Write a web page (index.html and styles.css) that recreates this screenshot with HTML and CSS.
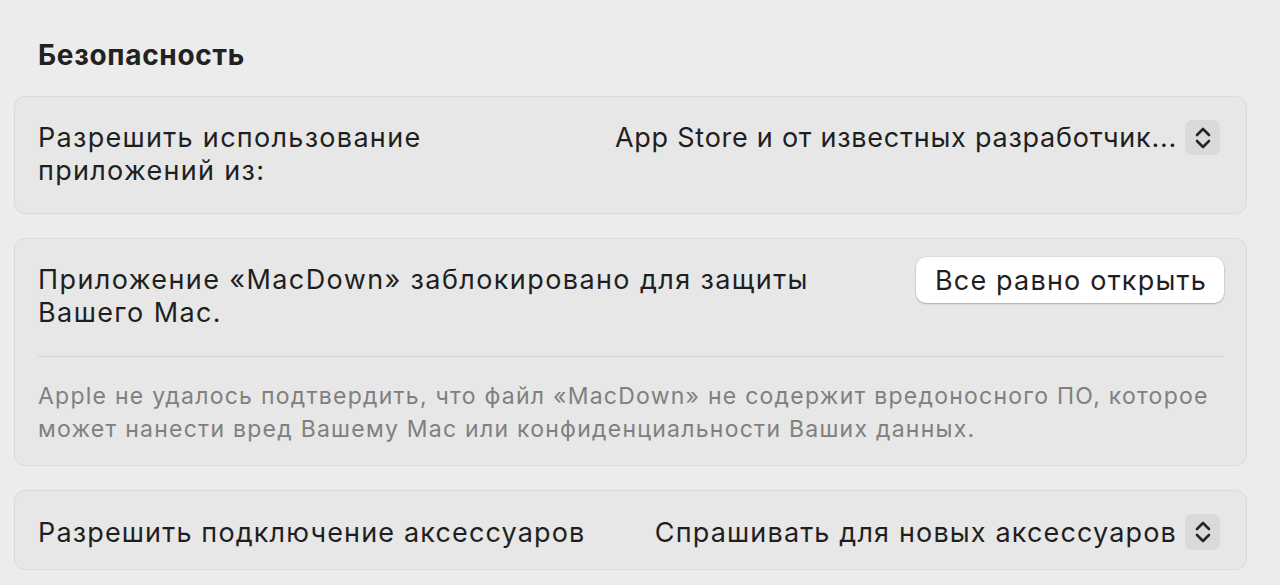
FILE: index.html
```html
<!DOCTYPE html>
<html lang="ru">
<head>
<meta charset="utf-8">
<link rel="stylesheet" href="styles.css">
</head>
<body>
<div class="page">
  <h2 class="section-title">Безопасность</h2>
  <div class="card card-apps">
    <div class="row">
      <div class="label">Разрешить использование<br>приложений из:</div>
      <div class="control">
        <span class="value value-tight">App Store и от известных разработчик...</span>
        <span class="stepper"><svg width="18" height="24" viewBox="0 0 18 24"><path d="M3 9 L9 3 L15 9 M3 15 L9 21 L15 15" fill="none" stroke="#262626" stroke-width="2.6" stroke-linecap="round" stroke-linejoin="round"/></svg></span>
      </div>
    </div>
  </div>
  <div class="card card-blocked">
    <div class="row">
      <div class="label label-wide">Приложение «MacDown» заблокировано для защиты<br>Вашего Mac.</div>
      <button class="btn">Все равно открыть</button>
    </div>
    <div class="divider"></div>
    <p class="note">Apple не удалось подтвердить, что файл «MacDown» не содержит вредоносного ПО, которое<br>может нанести вред Вашему Mac или конфиденциальности Ваших данных.</p>
  </div>
  <div class="card card-single">
    <div class="row row-center">
      <div class="label label-narrow">Разрешить подключение аксессуаров</div>
      <div class="control">
        <span class="value">Спрашивать для новых аксессуаров</span>
        <span class="stepper stepper-tall"><svg width="18" height="24" viewBox="0 0 18 24"><path d="M3 9 L9 3 L15 9 M3 15 L9 21 L15 15" fill="none" stroke="#262626" stroke-width="2.6" stroke-linecap="round" stroke-linejoin="round"/></svg></span>
      </div>
    </div>
  </div>
</div>
</body>
</html>
```
FILE: styles.css
```css
html, body {
  margin: 0;
  padding: 0;
  background: #ececec;
}
body {
  font-family: Inter, "Noto Sans", "DejaVu Sans", sans-serif;
  color: #1f1f1f;
  width: 1280px;
  height: 585px;
  overflow: hidden;
}
.page {
  padding: 0 33px 0 14px;
}
.section-title {
  margin: 0;
  padding: 38px 0 0 24px;
  height: 96px;
  box-sizing: border-box;
  font-size: 28px;
  font-weight: 700;
  line-height: 34px;
  letter-spacing: 0.7px;
  color: #222222;
}
.card {
  background: #e7e7e7;
  border: 1px solid #dadada;
  border-radius: 11px;
  margin-bottom: 24px;
}
.card-apps {
  padding: 24px 26px 26px 23px;
}
.row {
  display: flex;
  justify-content: space-between;
  align-items: flex-start;
}
.row-center {
  align-items: center;
}
.label {
  font-size: 27px;
  line-height: 33px;
  letter-spacing: 1.3px;
  color: #1f1f1f;
}
.label-wide {
  letter-spacing: 1.4px;
}
.label-narrow {
  letter-spacing: 1.15px;
}
.control {
  display: flex;
  align-items: center;
  gap: 8px;
  margin-top: -1px;
}
.row-center .control {
  margin-top: 0;
}
.value {
  font-size: 27px;
  line-height: 33px;
  letter-spacing: 1.15px;
  color: #1f1f1f;
}
.value-tight {
  letter-spacing: 0.75px;
}
.stepper {
  width: 35px;
  height: 35px;
  border-radius: 7px;
  background: #dadada;
  display: flex;
  align-items: center;
  justify-content: center;
}
.stepper-tall {
  height: 36px;
}
.card-blocked {
  padding: 24px 22px 19px 23px;
}
.btn {
  font-family: inherit;
  font-size: 27px;
  letter-spacing: 1.2px;
  color: #1f1f1f;
  background: #ffffff;
  border: none;
  border-radius: 10px;
  height: 46px;
  padding: 0 17px 0 19px;
  box-shadow: 0 1px 2px rgba(0,0,0,0.22), 0 0 0 0.5px rgba(0,0,0,0.08);
  margin-top: -6px;
}
.divider {
  height: 1px;
  background: #d5d5d5;
  margin: 27px 0 23px;
}
.note {
  margin: 0;
  font-size: 23px;
  line-height: 33px;
  letter-spacing: 1.25px;
  color: #808080;
  white-space: nowrap;
}
.card-single {
  padding: 23px 26px 19px 23px;
}
```
